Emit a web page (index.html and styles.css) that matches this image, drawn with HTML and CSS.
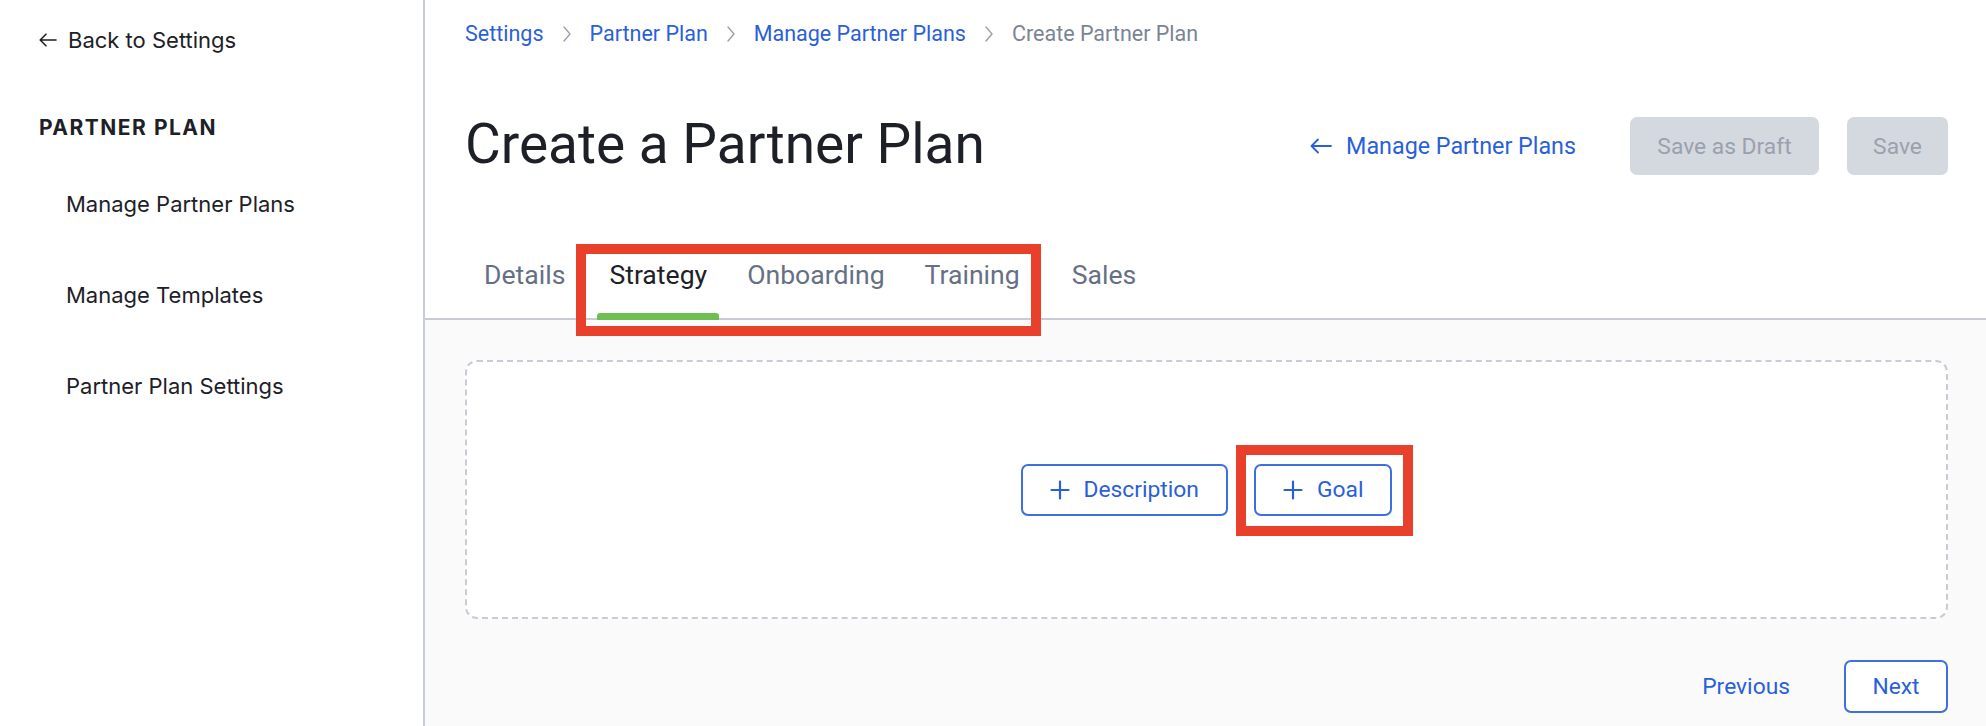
FILE: index.html
```html
<!DOCTYPE html>
<html lang="en">
<head>
<meta charset="utf-8">
<title>Create a Partner Plan</title>
<link rel="stylesheet" href="styles.css">
</head>
<body>
<div class="page">
  <aside class="sidebar">
    <a class="back" href="#">
      <svg class="back-arrow" width="18" height="14" viewBox="0 0 18 14"><path d="M17 7H1.5M7 1.2L1.2 7 7 12.8" fill="none" stroke="#1d2127" stroke-width="1.6" stroke-linecap="round" stroke-linejoin="round"/></svg>
      Back to Settings
    </a>
    <div class="section-title">PARTNER PLAN</div>
    <nav class="nav">
      <a class="nav-item" href="#">Manage Partner Plans</a>
      <a class="nav-item" href="#">Manage Templates</a>
      <a class="nav-item" href="#">Partner Plan Settings</a>
    </nav>
  </aside>

  <main class="main">
    <div class="top">
      <nav class="crumbs">
        <a class="crumb" href="#">Settings</a>
        <svg class="chev" width="10" height="18" viewBox="0 0 10 18"><path d="M2 2l6 7-6 7" fill="none" stroke="#9aa1ae" stroke-width="1.4" stroke-linecap="round" stroke-linejoin="round"/></svg>
        <a class="crumb" href="#">Partner Plan</a>
        <svg class="chev" width="10" height="18" viewBox="0 0 10 18"><path d="M2 2l6 7-6 7" fill="none" stroke="#9aa1ae" stroke-width="1.4" stroke-linecap="round" stroke-linejoin="round"/></svg>
        <a class="crumb" href="#">Manage Partner Plans</a>
        <svg class="chev" width="10" height="18" viewBox="0 0 10 18"><path d="M2 2l6 7-6 7" fill="none" stroke="#9aa1ae" stroke-width="1.4" stroke-linecap="round" stroke-linejoin="round"/></svg>
        <span class="crumb current">Create Partner Plan</span>
      </nav>

      <div class="title-row">
        <h1 class="title">Create a Partner Plan</h1>
        <div class="actions">
          <a class="back-link" href="#">
            <svg width="22" height="16" viewBox="0 0 22 16"><path d="M21 8H1.8M8 1.5L1.5 8 8 14.5" fill="none" stroke="#2a5fdc" stroke-width="1.8" stroke-linecap="round" stroke-linejoin="round"/></svg>
            Manage Partner Plans
          </a>
          <button class="btn-disabled draft">Save as Draft</button>
          <button class="btn-disabled save">Save</button>
        </div>
      </div>

      <div class="tabs">
        <div class="tab details">Details</div>
        <div class="tab active">Strategy</div>
        <div class="tab">Onboarding</div>
        <div class="tab">Training</div>
        <div class="tab sales">Sales</div>
      </div>
    </div>

    <div class="content">
      <div class="dropzone">
        <button class="btn-outline add">
          <svg width="20" height="20" viewBox="0 0 20 20"><path d="M10 1.5v17M1.5 10h17" stroke="#2a5fdc" stroke-width="2.2" stroke-linecap="round"/></svg>
          Description
        </button>
        <button class="btn-outline add">
          <svg width="20" height="20" viewBox="0 0 20 20"><path d="M10 1.5v17M1.5 10h17" stroke="#2a5fdc" stroke-width="2.2" stroke-linecap="round"/></svg>
          Goal
        </button>
      </div>
      <div class="footer">
        <button class="btn-text">Previous</button>
        <button class="btn-outline next">Next</button>
      </div>
    </div>
  </main>

  <div class="annot annot-tabs"></div>
  <div class="annot annot-goal"></div>
</div>
</body>
</html>
```

FILE: styles.css
```css
* { box-sizing: border-box; }

html, body {
  margin: 0;
  padding: 0;
  background: #ffffff;
}

body {
  font-family: Roboto, "Liberation Sans", sans-serif;
  color: #1d2127;
}

a { text-decoration: none; color: inherit; }

button {
  font-family: inherit;
  cursor: pointer;
}

.page {
  position: relative;
  display: grid;
  grid-template-columns: 425px 1fr;
  height: 100vh;
  overflow: hidden;
}

/* Sidebar */
.sidebar {
  border-right: 2px solid #c7cbdb;
  padding: 25px 0 0 39px;
  font-family: Inter, Roboto, sans-serif;
  background: #fff;
}

.back {
  display: flex;
  align-items: center;
  gap: 11px;
  height: 30px;
  font-size: 22px;
  color: #1d2127;
}

.section-title {
  margin-top: 58px;
  height: 30px;
  line-height: 30px;
  font-size: 21px;
  font-weight: 700;
  letter-spacing: 1.5px;
  color: #1d2127;
}

.nav {
  margin-top: 46px;
  display: flex;
  flex-direction: column;
  gap: 61px;
  padding-left: 27px;
}

.nav-item {
  height: 30px;
  line-height: 30px;
  font-size: 22px;
  color: #1d2127;
}

/* Main */
.main {
  display: flex;
  flex-direction: column;
  min-width: 0;
}

.top {
  padding: 0 38px 0 40px;
  background: #fff;
}

.crumbs {
  display: flex;
  align-items: center;
  gap: 18px;
  padding-top: 20px;
  height: 48px;
  font-size: 21.5px;
  line-height: 28px;
}

.crumb { color: #2a5fdc; }
.crumb.current { color: #7b8494; }
.chev { display: block; }

.title-row {
  margin-top: 64px;
  height: 64px;
  display: flex;
  align-items: center;
  justify-content: space-between;
}

.title {
  margin: 0;
  font-size: 55px;
  line-height: 64px;
  font-weight: 400;
  color: #1d2127;
}

.actions {
  display: flex;
  align-items: center;
  margin-top: 4px;
}

.back-link {
  display: flex;
  align-items: center;
  gap: 14px;
  font-size: 23.3px;
  color: #2a5fdc;
  margin-right: 54px;
}

.btn-disabled {
  height: 58px;
  border: none;
  border-radius: 7px;
  background: #d4d8df;
  color: #9aa1ad;
  font-size: 22.8px;
  padding: 0 24px;
  cursor: default;
}

.draft { width: 189px; }
.save { width: 101px; margin-left: 28px; }

/* Tabs */
.tabs {
  display: flex;
  gap: 16px;
  margin: 84px -38px 0 -40px;
  padding-left: 47px;
  border-bottom: 2px solid #c9ccd6;
}

.tab {
  position: relative;
  padding: 0 12px 28px;
  font-size: 26.6px;
  line-height: 30px;
  color: #667085;
}

.tab.details { margin-right: 4px; }
.tab.sales { margin-left: 12px; }

.tab.active { color: #1d2127; }

.tab.active::after {
  content: "";
  position: absolute;
  left: 0;
  right: 0;
  bottom: -2px;
  height: 7px;
  border-radius: 3px 3px 0 0;
  background: #6fbf50;
}

/* Content */
.content {
  flex: 1;
  background: #fafafa;
  padding: 40px 38px 0 40px;
}

.dropzone {
  height: 259px;
  border: 2px dashed #c9ccd6;
  border-radius: 12px;
  background: #fff;
  display: flex;
  align-items: center;
  justify-content: center;
  gap: 26px;
}

.btn-outline {
  display: flex;
  align-items: center;
  justify-content: center;
  gap: 14px;
  height: 52px;
  padding: 0 27px;
  border: 2px solid #3d6fe3;
  border-radius: 7px;
  background: #fff;
  color: #2a5fdc;
  font-size: 22.8px;
}

.footer {
  margin-top: 41px;
  display: flex;
  justify-content: flex-end;
  align-items: center;
  gap: 26px;
}

.btn-text {
  height: 53px;
  padding: 0 28px;
  border: none;
  background: transparent;
  color: #2a5fdc;
  font-size: 22.8px;
}

.next {
  height: 53px;
  width: 104px;
  padding: 0;
}

/* Annotation overlays */
.annot {
  position: absolute;
  border: 10px solid #e8402a;
  pointer-events: none;
}

.annot-tabs {
  left: 576px;
  top: 244px;
  width: 465px;
  height: 92px;
}

.annot-goal {
  left: 1236px;
  top: 445px;
  width: 177px;
  height: 91px;
}
```
